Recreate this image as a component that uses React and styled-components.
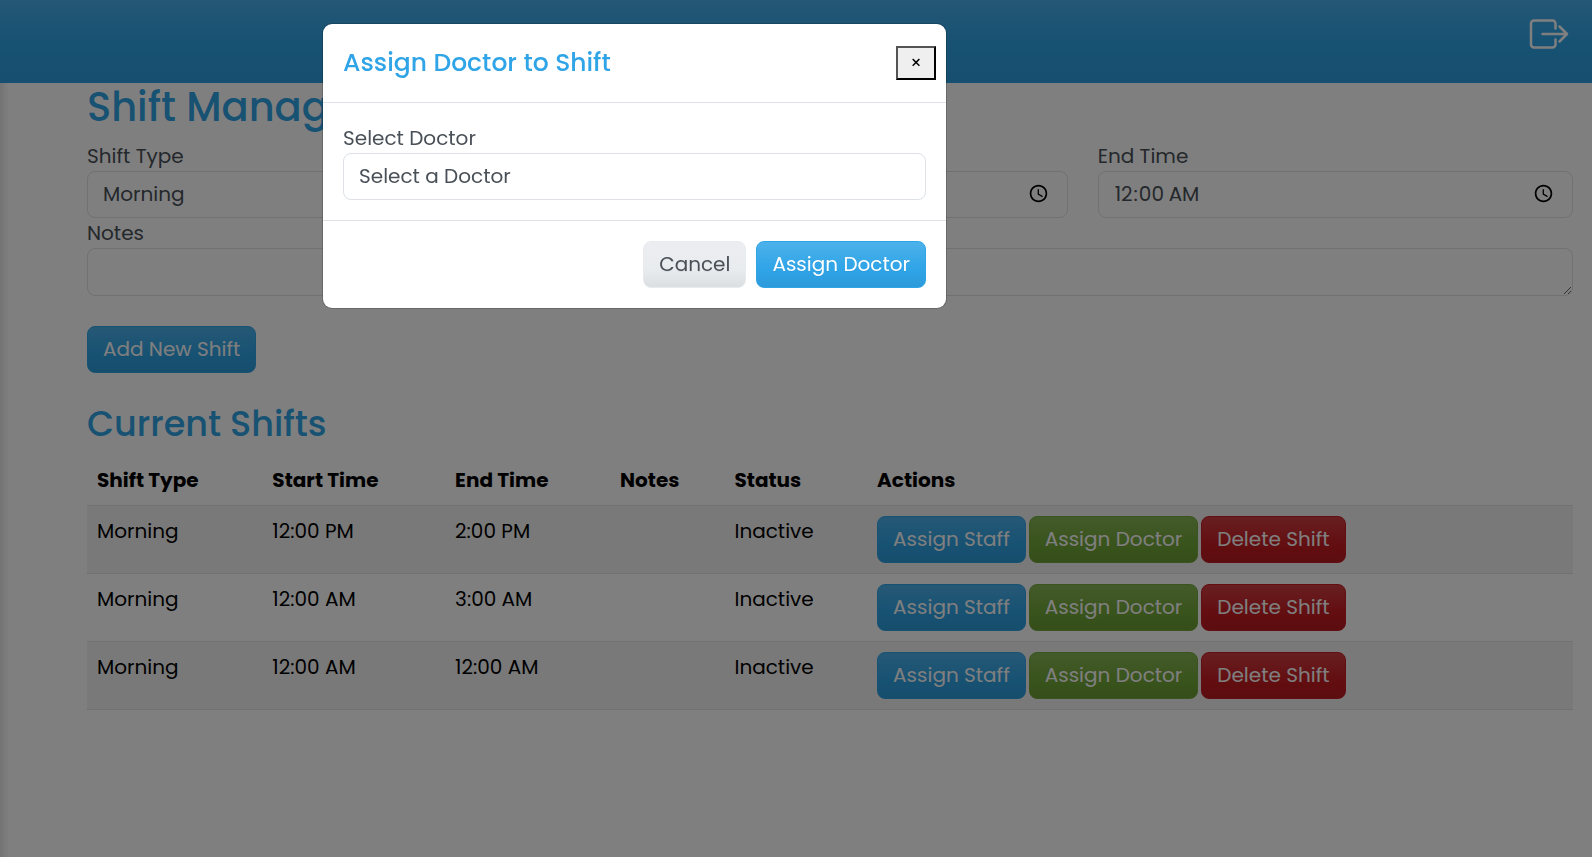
import React, { useState } from "react";
import styled, { createGlobalStyle, css } from "styled-components";

const GlobalStyle = createGlobalStyle`
  *, *::before, *::after { box-sizing: border-box; }
  body {
    margin: 0;
    background: #fff;
    color: #495057;
    font-family: Poppins, Inter, "Open Sans", sans-serif;
    font-size: 20px;
    line-height: 30px;
  }
  button, input, select, textarea { font: inherit; color: inherit; margin: 0; }
`;

const tones = {
  primary: ["#4eb2eb", "#2fa4e7", "#2c9ad9", "#fff"],
  success: ["#88b556", "#73a839", "#6a9b34", "#fff"],
  danger: ["#cf4044", "#c71c22", "#b71a1f", "#fff"],
  secondary: ["#ecedf1", "#e9ecef", "#dbdee1", "#495057"],
};

const Page = styled.div`
  display: flex;
  flex-direction: column;
  min-height: 100vh;
`;

const TopBar = styled.header`
  display: flex;
  justify-content: flex-end;
  align-items: flex-start;
  height: 83px;
  padding: 19px 23px;
  background: linear-gradient(180deg, #4ab0ea 0%, #2fa4e7 50%, #2e9ee0 100%);
`;

const IconButton = styled.button`
  display: flex;
  padding: 0;
  border: 0;
  background: none;
  color: #fff;
`;

const Content = styled.main`
  flex: 1;
  padding: 0 19px 40px 87px;
  box-shadow: inset 10px 0 10px -8px rgba(0, 0, 0, 0.15);
`;

const Heading = styled.h2`
  margin: 0 0 10px;
  color: #2fa4e7;
  font-size: 40px;
  line-height: 48px;
  font-weight: 500;
`;

const SubHeading = styled.h3`
  margin: 30px 0 10px;
  color: #2fa4e7;
  font-size: 35px;
  line-height: 42px;
  font-weight: 500;
`;

const FieldRow = styled.div`
  display: grid;
  grid-template-columns: repeat(3, 1fr);
  gap: 30px;
`;

const Field = styled.div`
  display: flex;
  flex-direction: column;
`;

const control = css`
  width: 100%;
  height: 47px;
  padding: 6px 15px 8px;
  border: 1px solid #dee2e6;
  border-radius: 8px;
  background: #fff;
  outline: none;
`;

const Select = styled.select`
  ${control}
  appearance: none;
`;

const TimeInput = styled.input`
  ${control}
`;

const TextArea = styled.textarea`
  ${control}
  display: block;
  height: 48px;
  resize: vertical;
`;

const Button = styled.button`
  height: 47px;
  padding: 0 15px 2px;
  border: 1px solid ${(p) => tones[p.$tone][1]};
  border-radius: 8px;
  background: linear-gradient(
    180deg,
    ${(p) => tones[p.$tone][0]} 0%,
    ${(p) => tones[p.$tone][1]} 60%,
    ${(p) => tones[p.$tone][2]} 100%
  );
  background-origin: border-box;
  color: ${(p) => tones[p.$tone][3]};
  text-shadow: 0 1px 0 rgba(0, 0, 0, 0.05);
  white-space: nowrap;
`;

const FormActions = styled.div`
  display: flex;
  margin-top: 30px;
`;

const Table = styled.table`
  width: 100%;
  table-layout: fixed;
  border-spacing: 0;
  color: #000;

  th, td {
    padding: 10px;
    border-bottom: 1px solid #dee2e6;
    text-align: left;
    vertical-align: top;
  }
  tbody tr:nth-child(odd) { background: #f2f2f2; }
`;

const Column = styled.col`
  width: ${(p) => p.$width};
`;

const Actions = styled.div`
  display: flex;
  gap: 3px;
`;

const Overlay = styled.div`
  position: fixed;
  inset: 0;
  padding: 24px 323px;
  background: rgba(0, 0, 0, 0.5);
`;

const Dialog = styled.div`
  width: 100%;
  max-width: 623px;
  border-radius: 9px;
  background: #fff;
  box-shadow: 0 0 0 1px rgba(0, 0, 0, 0.18);
`;

const DialogHeader = styled.div`
  display: flex;
  justify-content: space-between;
  align-items: center;
  padding: 20px 10px 20px 20px;
  border-bottom: 1px solid #dee2e6;
`;

const DialogTitle = styled.h5`
  margin: 0;
  color: #2fa4e7;
  font-size: 25px;
  line-height: 38px;
  font-weight: 500;
`;

const CloseButton = styled.button`
  width: 40px;
  height: 34px;
  padding: 0;
  border: 2px outset #000;
  background: #efefef;
  color: #000;
  font-size: 18px;
  line-height: 26px;
`;

const DialogBody = styled.div`
  padding: 20px;
`;

const DialogFooter = styled.div`
  display: flex;
  justify-content: flex-end;
  gap: 10px;
  padding: 20px;
  border-top: 1px solid #dee2e6;
`;

const LogoutIcon = () => (
  <svg width="40" height="30" viewBox="0 0 40 30" fill="none" stroke="currentColor" strokeWidth="2.5" strokeLinecap="round" strokeLinejoin="round" aria-hidden="true">
    <path d="M26.500 9.500V4.500a3 3 0 0 0-3-3H5a3 3 0 0 0-3 3v21a3 3 0 0 0 3 3h18.500a3 3 0 0 0 3-3v-5" />
    <path d="M13.500 15H38M30.500 7.500 38 15l-7.500 7.500" />
  </svg>
);

const columns = [
  ["Shift Type", "11.8%"],
  ["Start Time", "12.3%"],
  ["End Time", "11.1%"],
  ["Notes", "7.7%"],
  ["Status", "9.6%"],
  ["Actions", "47.5%"],
];

const shifts = [
  { id: 1, type: "Morning", start: "12:00 PM", end: "2:00 PM", notes: "", status: "Inactive" },
  { id: 2, type: "Morning", start: "12:00 AM", end: "3:00 AM", notes: "", status: "Inactive" },
  { id: 3, type: "Morning", start: "12:00 AM", end: "12:00 AM", notes: "", status: "Inactive" },
];

function AssignDoctorDialog({ onClose }) {
  return (
    <Overlay>
      <Dialog role="dialog" aria-modal="true" aria-labelledby="assign-title">
        <DialogHeader>
          <DialogTitle id="assign-title">Assign Doctor to Shift</DialogTitle>
          <CloseButton type="button" aria-label="Close" onClick={onClose}>×</CloseButton>
        </DialogHeader>
        <DialogBody>
          <Field>
            <label htmlFor="doctor">Select Doctor</label>
            <Select id="doctor" defaultValue="">
              <option value="">Select a Doctor</option>
            </Select>
          </Field>
        </DialogBody>
        <DialogFooter>
          <Button type="button" $tone="secondary" onClick={onClose}>Cancel</Button>
          <Button type="button" $tone="primary">Assign Doctor</Button>
        </DialogFooter>
      </Dialog>
    </Overlay>
  );
}

export default function App() {
  const [open, setOpen] = useState(true);
  return (
    <Page>
      <GlobalStyle />
      <TopBar>
        <IconButton type="button" aria-label="Log out"><LogoutIcon /></IconButton>
      </TopBar>
      <Content>
        <Heading>Shift Management</Heading>
        <form onSubmit={(e) => e.preventDefault()}>
          <FieldRow>
            <Field>
              <label htmlFor="type">Shift Type</label>
              <Select id="type" defaultValue="Morning">
                <option>Morning</option>
              </Select>
            </Field>
            <Field>
              <label htmlFor="start">Start Time</label>
              <TimeInput id="start" type="time" defaultValue="00:00" />
            </Field>
            <Field>
              <label htmlFor="end">End Time</label>
              <TimeInput id="end" type="time" defaultValue="00:00" />
            </Field>
          </FieldRow>
          <Field>
            <label htmlFor="notes">Notes</label>
            <TextArea id="notes" rows={1} />
          </Field>
          <FormActions>
            <Button type="submit" $tone="primary">Add New Shift</Button>
          </FormActions>
        </form>
        <SubHeading>Current Shifts</SubHeading>
        <Table>
          <colgroup>
            {columns.map(([name, width]) => <Column key={name} $width={width} />)}
          </colgroup>
          <thead>
            <tr>{columns.map(([name]) => <th key={name} scope="col">{name}</th>)}</tr>
          </thead>
          <tbody>
            {shifts.map((s) => (
              <tr key={s.id}>
                <td>{s.type}</td>
                <td>{s.start}</td>
                <td>{s.end}</td>
                <td>{s.notes}</td>
                <td>{s.status}</td>
                <td>
                  <Actions>
                    <Button type="button" $tone="primary">Assign Staff</Button>
                    <Button type="button" $tone="success" onClick={() => setOpen(true)}>Assign Doctor</Button>
                    <Button type="button" $tone="danger">Delete Shift</Button>
                  </Actions>
                </td>
              </tr>
            ))}
          </tbody>
        </Table>
      </Content>
      {open && <AssignDoctorDialog onClose={() => setOpen(false)} />}
    </Page>
  );
}
